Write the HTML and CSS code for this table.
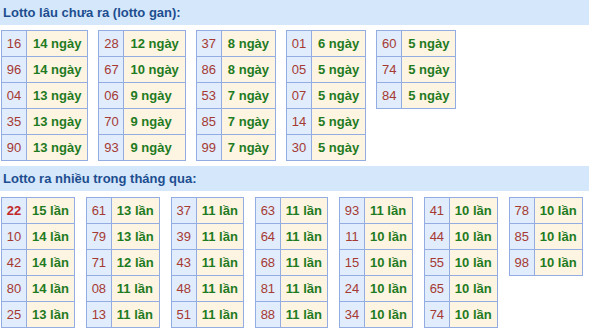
FILE: index.html
```html
<!DOCTYPE html>
<html>
<head>
<meta charset="utf-8">
<link rel="stylesheet" href="styles.css">
</head>
<body>
<div class="head">Lotto lâu chưa ra (lotto gan):</div>
<div class="group">
  <table class="lt"><tr><td class="n">16</td><td class="v">14 ngày</td></tr><tr><td class="n">96</td><td class="v">14 ngày</td></tr><tr><td class="n">04</td><td class="v">13 ngày</td></tr><tr><td class="n">35</td><td class="v">13 ngày</td></tr><tr><td class="n">90</td><td class="v">13 ngày</td></tr></table>
  <table class="lt"><tr><td class="n">28</td><td class="v">12 ngày</td></tr><tr><td class="n">67</td><td class="v">10 ngày</td></tr><tr><td class="n">06</td><td class="v">9 ngày</td></tr><tr><td class="n">70</td><td class="v">9 ngày</td></tr><tr><td class="n">93</td><td class="v">9 ngày</td></tr></table>
  <table class="lt"><tr><td class="n">37</td><td class="v">8 ngày</td></tr><tr><td class="n">86</td><td class="v">8 ngày</td></tr><tr><td class="n">53</td><td class="v">7 ngày</td></tr><tr><td class="n">85</td><td class="v">7 ngày</td></tr><tr><td class="n">99</td><td class="v">7 ngày</td></tr></table>
  <table class="lt"><tr><td class="n">01</td><td class="v">6 ngày</td></tr><tr><td class="n">05</td><td class="v">5 ngày</td></tr><tr><td class="n">07</td><td class="v">5 ngày</td></tr><tr><td class="n">14</td><td class="v">5 ngày</td></tr><tr><td class="n">30</td><td class="v">5 ngày</td></tr></table>
  <table class="lt"><tr><td class="n">60</td><td class="v">5 ngày</td></tr><tr><td class="n">74</td><td class="v">5 ngày</td></tr><tr><td class="n">84</td><td class="v">5 ngày</td></tr></table>
</div>
<div class="head head2">Lotto ra nhiều trong tháng qua:</div>
<div class="group group2">
  <table class="lt"><tr><td class="n hot">22</td><td class="v">15 lần</td></tr><tr><td class="n">10</td><td class="v">14 lần</td></tr><tr><td class="n">42</td><td class="v">14 lần</td></tr><tr><td class="n">80</td><td class="v">14 lần</td></tr><tr><td class="n">25</td><td class="v">13 lần</td></tr></table>
  <table class="lt"><tr><td class="n">61</td><td class="v">13 lần</td></tr><tr><td class="n">79</td><td class="v">13 lần</td></tr><tr><td class="n">71</td><td class="v">12 lần</td></tr><tr><td class="n">08</td><td class="v">11 lần</td></tr><tr><td class="n">13</td><td class="v">11 lần</td></tr></table>
  <table class="lt"><tr><td class="n">37</td><td class="v">11 lần</td></tr><tr><td class="n">39</td><td class="v">11 lần</td></tr><tr><td class="n">43</td><td class="v">11 lần</td></tr><tr><td class="n">48</td><td class="v">11 lần</td></tr><tr><td class="n">51</td><td class="v">11 lần</td></tr></table>
  <table class="lt"><tr><td class="n">63</td><td class="v">11 lần</td></tr><tr><td class="n">64</td><td class="v">11 lần</td></tr><tr><td class="n">68</td><td class="v">11 lần</td></tr><tr><td class="n">81</td><td class="v">11 lần</td></tr><tr><td class="n">88</td><td class="v">11 lần</td></tr></table>
  <table class="lt"><tr><td class="n">93</td><td class="v">11 lần</td></tr><tr><td class="n">11</td><td class="v">10 lần</td></tr><tr><td class="n">15</td><td class="v">10 lần</td></tr><tr><td class="n">24</td><td class="v">10 lần</td></tr><tr><td class="n">34</td><td class="v">10 lần</td></tr></table>
  <table class="lt"><tr><td class="n">41</td><td class="v">10 lần</td></tr><tr><td class="n">44</td><td class="v">10 lần</td></tr><tr><td class="n">55</td><td class="v">10 lần</td></tr><tr><td class="n">65</td><td class="v">10 lần</td></tr><tr><td class="n">74</td><td class="v">10 lần</td></tr></table>
  <table class="lt"><tr><td class="n">78</td><td class="v">10 lần</td></tr><tr><td class="n">85</td><td class="v">10 lần</td></tr><tr><td class="n">98</td><td class="v">10 lần</td></tr></table>
</div>
</body>
</html>
```
FILE: styles.css
```css
html, body {
  margin: 0;
  padding: 0;
  background: #ffffff;
  font-family: "Liberation Sans", Arial, sans-serif;
}
.head {
  height: 25px;
  line-height: 26px;
  background: #d5e7fb;
  color: #1d4e8f;
  font-weight: bold;
  font-size: 13px;
  padding-left: 3px;
}
.head2 {
  margin-top: 5px;
}
.group {
  display: flex;
  flex-wrap: wrap;
  align-items: flex-start;
  column-gap: 10px;
  padding: 5px 0 0 1px;
}
.group2 {
  padding-top: 6px;
  column-gap: 11px;
}
.lt {
  border-collapse: collapse;
  font-size: 13px;
}
.lt td {
  border: 1px solid #93ade3;
  height: 26px;
  padding: 0 6px;
  box-sizing: border-box;
  white-space: nowrap;
}
.lt .n {
  background: #e1ecfc;
  color: #a53a33;
  width: 25px;
  text-align: center;
  padding: 0;
}
.lt .n.hot {
  font-weight: bold;
  color: #c0282a;
}
.lt .v {
  background: #fdf4e2;
  color: #1f7b1f;
  font-weight: bold;
}
.group2 .v {
  padding: 0 5px;
}
```
